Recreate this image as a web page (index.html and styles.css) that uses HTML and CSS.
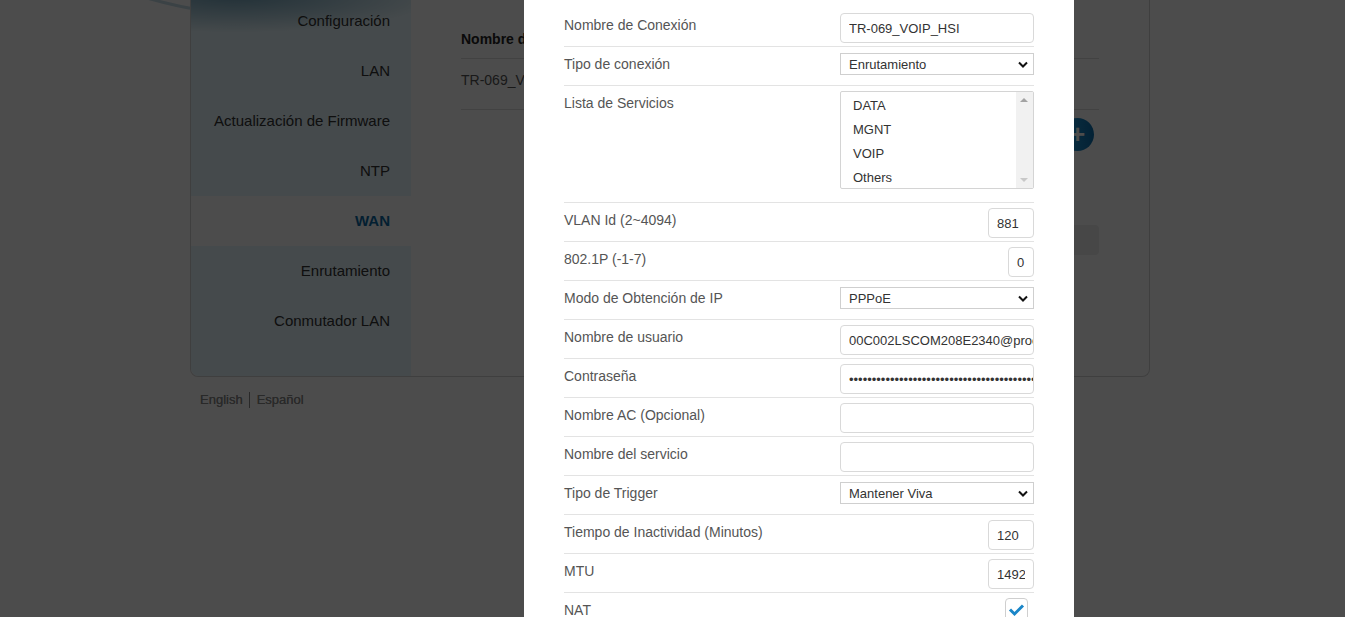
FILE: index.html
```html
<!DOCTYPE html>
<html lang="es">
<head>
  <meta charset="UTF-8">
  <title>WAN</title>
  <link rel="stylesheet" href="styles.css">
</head>
<body>

<div class="page">
  <svg class="wave" width="260" height="40" viewBox="0 0 260 40">
    <path d="M140 0 C160 6 175 10 200 14 C225 18 245 16 260 14" fill="none" stroke="#9fc6d8" stroke-width="3" opacity="0.6"/>
  </svg>

  <div class="card">
    <nav class="sidebar">
      <a class="nav-item">Configuración</a>
      <a class="nav-item">LAN</a>
      <a class="nav-item">Actualización de Firmware</a>
      <a class="nav-item">NTP</a>
      <a class="nav-item active">WAN</a>
      <a class="nav-item">Enrutamiento</a>
      <a class="nav-item">Conmutador LAN</a>
    </nav>

    <div class="main">
      <table class="wan-table">
        <tr>
          <th>Nombre de Conexión</th>
          <th>VLAN</th>
          <th>Modo</th>
          <th>Estado</th>
        </tr>
        <tr>
          <td>TR-069_VOIP_HSI</td>
          <td>881</td>
          <td>PPPoE</td>
          <td>Conectado</td>
        </tr>
      </table>
      <div class="add-wrap">
        <button class="btn-add">+</button>
      </div>
      <div class="save-wrap">
        <button class="btn-save">Aplicar</button>
      </div>
    </div>
  </div>

  <div class="lang">
    <a>English</a><span class="lang-sep"></span><a>Español</a>
  </div>
</div>

<div class="overlay"></div>

<div class="modal">
  <form class="form">
    <div class="row">
      <label>Nombre de Conexión</label>
      <input class="field" type="text" value="TR-069_VOIP_HSI">
    </div>
    <div class="row">
      <label>Tipo de conexión</label>
      <div class="select-wrap">
        <select class="select"><option>Enrutamiento</option><option>Puente</option></select>
        <svg class="chevron" width="10" height="7" viewBox="0 0 10 7"><path d="M1 1.5 L5 5.5 L9 1.5" fill="none" stroke="#111" stroke-width="2"/></svg>
      </div>
    </div>
    <div class="row">
      <label>Lista de Servicios</label>
      <div class="listbox">
        <div class="options">
          <div class="option">DATA</div>
          <div class="option">MGNT</div>
          <div class="option">VOIP</div>
          <div class="option">Others</div>
        </div>
        <div class="scroll">
          <span class="arrow-up"></span>
          <span class="arrow-down"></span>
        </div>
      </div>
    </div>
    <div class="row">
      <label>VLAN Id (2~4094)</label>
      <input class="field small" type="text" value="881">
    </div>
    <div class="row">
      <label>802.1P (-1-7)</label>
      <input class="field tiny" type="text" value="0">
    </div>
    <div class="row">
      <label>Modo de Obtención de IP</label>
      <div class="select-wrap">
        <select class="select"><option>PPPoE</option><option>DHCP</option><option>Estático</option></select>
        <svg class="chevron" width="10" height="7" viewBox="0 0 10 7"><path d="M1 1.5 L5 5.5 L9 1.5" fill="none" stroke="#111" stroke-width="2"/></svg>
      </div>
    </div>
    <div class="row">
      <label>Nombre de usuario</label>
      <input class="field wide" type="text" value="00C002LSCOM208E2340@procesador">
    </div>
    <div class="row">
      <label>Contraseña</label>
      <input class="field wide" type="password" value="0123456789012345678901234567890123456789012">
    </div>
    <div class="row">
      <label>Nombre AC (Opcional)</label>
      <input class="field" type="text" value="">
    </div>
    <div class="row">
      <label>Nombre del servicio</label>
      <input class="field" type="text" value="">
    </div>
    <div class="row">
      <label>Tipo de Trigger</label>
      <div class="select-wrap">
        <select class="select"><option>Mantener Viva</option><option>Bajo demanda</option></select>
        <svg class="chevron" width="10" height="7" viewBox="0 0 10 7"><path d="M1 1.5 L5 5.5 L9 1.5" fill="none" stroke="#111" stroke-width="2"/></svg>
      </div>
    </div>
    <div class="row">
      <label>Tiempo de Inactividad (Minutos)</label>
      <input class="field small" type="text" value="120">
    </div>
    <div class="row">
      <label>MTU</label>
      <input class="field small" type="text" value="1492">
    </div>
    <div class="row">
      <label>NAT</label>
      <span class="checkbox">
        <svg width="21" height="21" viewBox="0 0 21 21"><path d="M4 10.5 L8.5 15 L17 6.5" fill="none" stroke="#1a86c8" stroke-width="3"/></svg>
      </span>
    </div>
  </form>
</div>

</body>
</html>
```

FILE: styles.css
```css
body {
  margin: 0;
  background: #fff;
  font-family: 'Liberation Sans', Arial, sans-serif;
  color: #333;
  overflow: hidden;
}

.page {
  position: relative;
  padding-left: 190px;
}

.wave {
  position: absolute;
  top: 0;
  left: 0;
}

.card {
  position: relative;
  display: flex;
  width: 958px;
  margin-top: -4px;
  background: #fff;
  border: 1px solid #d4d4d4;
  border-top: none;
  border-radius: 0 0 8px 8px;
}

.sidebar {
  width: 220px;
  padding-bottom: 30px;
  display: flex;
  flex-direction: column;
  background: radial-gradient(ellipse 200px 36px at 20% 0%, rgba(40, 110, 145, 0.6), transparent), #e6f7fd;
  border-radius: 0 0 0 8px;
}

.nav-item {
  height: 50px;
  line-height: 50px;
  padding-right: 21px;
  text-align: right;
  font-size: 15px;
  color: #333;
}

.nav-item.active {
  background: #fff;
  color: #0a6aa5;
  font-weight: bold;
}

.main {
  flex: 1;
  padding: 24px 50px 0;
}

.wan-table {
  width: 100%;
  border-collapse: collapse;
  font-size: 14px;
}

.wan-table th {
  height: 38px;
  padding: 0;
  text-align: left;
  border-bottom: 1px solid #ddd;
  color: #222;
}

.wan-table td {
  height: 42px;
  padding: 0 0 8px;
  border-bottom: 1px solid #ddd;
  color: #555;
}

.add-wrap {
  display: flex;
  justify-content: flex-end;
  padding: 8px 5px 0 0;
}

.btn-add {
  width: 33px;
  height: 33px;
  border: none;
  border-radius: 50%;
  background: linear-gradient(90deg, #2aa3e0, #0b70b0);
  color: #fff;
  font-size: 26px;
  font-weight: bold;
  line-height: 33px;
  padding: 0;
}

.save-wrap {
  display: flex;
  justify-content: flex-end;
  padding-top: 74px;
}

.btn-save {
  width: 90px;
  height: 30px;
  border: none;
  border-radius: 4px;
  background: #eee;
  color: #555;
  font-size: 13px;
}

.lang {
  display: flex;
  align-items: center;
  padding: 13px 0 0 10px;
  font-size: 13px;
  line-height: 20px;
}

.lang a {
  color: #8a8a8a;
  text-shadow: 0 0 0.4px #8a8a8a;
}

.lang-sep {
  width: 1px;
  height: 16px;
  margin: 0 7px 0 6px;
  background: #8a8a8a;
}

.overlay {
  position: fixed;
  top: 0;
  left: 0;
  right: 0;
  bottom: 0;
  background: rgba(0, 0, 0, 0.7);
}

.modal {
  position: fixed;
  top: 0;
  bottom: 0;
  left: 524px;
  width: 550px;
  background: #fff;
  overflow: hidden;
}

.form {
  padding: 8px 40px 0;
}

.row {
  display: flex;
  justify-content: space-between;
  align-items: flex-start;
  min-height: 39px;
  box-sizing: border-box;
  padding: 5px 0 3px;
  border-bottom: 1px solid #e3e3e3;
}

.row label {
  margin-top: 2px;
  line-height: 20px;
  font-size: 14px;
  color: #555;
}

.field {
  width: 194px;
  height: 30px;
  box-sizing: border-box;
  padding: 0 8px;
  border: 1px solid #d9d9d9;
  border-radius: 4px;
  font-family: 'Liberation Sans', Arial, sans-serif;
  font-size: 13px;
  color: #333;
  outline: none;
}

.field.wide { padding-right: 0; }
.field.small { width: 46px; }
.field.tiny { width: 26px; }

.select-wrap {
  position: relative;
  margin-top: 1px;
}

.select {
  width: 194px;
  height: 22px;
  box-sizing: border-box;
  padding: 1px 8px 0;
  border: 1px solid #cfcfcf;
  border-radius: 0;
  background: #fff;
  font-family: 'Liberation Sans', Arial, sans-serif;
  font-size: 13px;
  color: #333;
  appearance: none;
  -webkit-appearance: none;
}

.chevron {
  position: absolute;
  right: 6px;
  top: 8px;
}

.listbox {
  display: flex;
  width: 194px;
  height: 98px;
  box-sizing: border-box;
  margin-bottom: 10px;
  border: 1px solid #d4d4d4;
  border-radius: 2px;
  overflow: hidden;
}

.options {
  flex: 1;
  padding-top: 2px;
}

.option {
  padding-left: 12px;
  line-height: 24px;
  font-size: 13px;
  color: #333;
}

.scroll {
  position: relative;
  width: 17px;
  background: #f1f1f1;
}

.arrow-up, .arrow-down {
  position: absolute;
  left: 4px;
  width: 0;
  height: 0;
  border-left: 4px solid transparent;
  border-right: 4px solid transparent;
}

.arrow-up {
  top: 6px;
  border-bottom: 4px solid #a3a3a3;
}

.arrow-down {
  bottom: 6px;
  border-top: 4px solid #c8c8c8;
}

.checkbox {
  display: flex;
  align-items: center;
  justify-content: center;
  width: 23px;
  height: 23px;
  box-sizing: border-box;
  margin: 0 6px 0 0;
  border: 1px solid #cfcfcf;
  border-radius: 4px;
}
```
